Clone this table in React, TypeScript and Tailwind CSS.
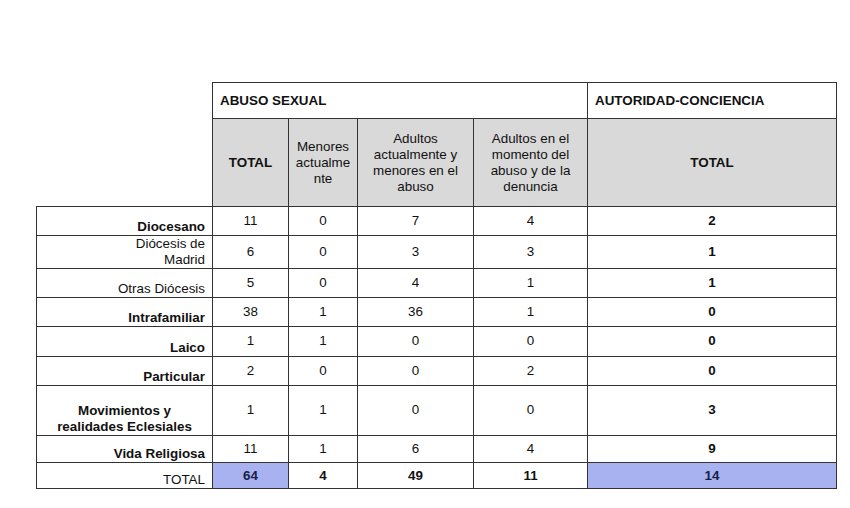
import React from "react";

type Row = {
  label: React.ReactNode;
  bold: boolean;
  center?: boolean;
  h: string;
  v: (string | number)[];
};

const rows: Row[] = [
  { label: "Diocesano", bold: true, h: "h-[29px]", v: [11, 0, 7, 4, 2] },
  { label: <>Diócesis de<br />Madrid</>, bold: false, h: "h-[33px]", v: [6, 0, 3, 3, 1] },
  { label: "Otras Diócesis", bold: false, h: "h-[29px]", v: [5, 0, 4, 1, 1] },
  { label: "Intrafamiliar", bold: true, h: "h-[29px]", v: [38, 1, 36, 1, 0] },
  { label: "Laico", bold: true, h: "h-[30px]", v: [1, 1, 0, 0, 0] },
  { label: "Particular", bold: true, h: "h-[29px]", v: [2, 0, 0, 2, 0] },
  { label: <>Movimientos y<br />realidades Eclesiales</>, bold: true, center: true, h: "h-[50px]", v: [1, 1, 0, 0, 3] },
  { label: "Vida Religiosa", bold: true, h: "h-[27px]", v: [11, 1, 6, 4, 9] },
];

const cell = "border-[1.5px] border-[#333333]";

export default function App() {
  return (
    <div
      className="w-[850px] h-[508px] bg-white pt-[82px] pl-[36px] text-[#111111] text-[13.4px] leading-[16px]"
      style={{ fontFamily: '"Liberation Sans", Arial, sans-serif' }}
    >
      <table className="table-fixed border-collapse w-[800px]">
        <colgroup>
          <col className="w-[176px]" />
          <col className="w-[76px]" />
          <col className="w-[69px]" />
          <col className="w-[116px]" />
          <col className="w-[114px]" />
          <col className="w-[249px]" />
        </colgroup>
        <tbody>
          <tr className="h-[36px]">
            <td></td>
            <td colSpan={4} className={`${cell} px-[7px] text-left font-bold align-middle`}>
              ABUSO SEXUAL
            </td>
            <td className={`${cell} px-[7px] text-left font-bold align-middle`}>
              AUTORIDAD-CONCIENCIA
            </td>
          </tr>
          <tr className="h-[88px]">
            <td></td>
            <td className={`${cell} bg-[#d9d9d9] text-center font-bold align-middle`}>TOTAL</td>
            <td className={`${cell} bg-[#d9d9d9] text-center align-middle px-[3px]`}>
              Menores<br />actualme<br />nte
            </td>
            <td className={`${cell} bg-[#d9d9d9] text-center align-middle`}>
              Adultos<br />actualmente y<br />menores en el<br />abuso
            </td>
            <td className={`${cell} bg-[#d9d9d9] text-center align-middle`}>
              Adultos en el<br />momento del<br />abuso y de la<br />denuncia
            </td>
            <td className={`${cell} bg-[#d9d9d9] text-center font-bold align-middle`}>TOTAL</td>
          </tr>
          {rows.map((r, i) => (
            <tr key={i} className={r.h}>
              <td
                className={`${cell} ${r.center ? "text-center pl-[7px]" : "text-right"} align-bottom pb-0 pr-[7px] ${r.bold ? "font-bold" : ""}`}
              >
                {r.label}
              </td>
              {r.v.map((x, j) => (
                <td
                  key={j}
                  className={`${cell} text-center align-middle pb-[1px] ${j === 4 ? "font-bold" : ""}`}
                >
                  {x}
                </td>
              ))}
            </tr>
          ))}
          <tr className="h-[26px]">
            <td className={`${cell} text-right align-bottom pb-0 pr-[7px]`}>TOTAL</td>
            <td className={`${cell} bg-[#a8b2f1] text-[#1a1f4a] text-center align-middle font-bold`}>64</td>
            <td className={`${cell} text-center align-middle font-bold`}>4</td>
            <td className={`${cell} text-center align-middle font-bold`}>49</td>
            <td className={`${cell} text-center align-middle font-bold`}>11</td>
            <td className={`${cell} bg-[#a8b2f1] text-[#1a1f4a] text-center align-middle font-bold`}>14</td>
          </tr>
        </tbody>
      </table>
    </div>
  );
}
